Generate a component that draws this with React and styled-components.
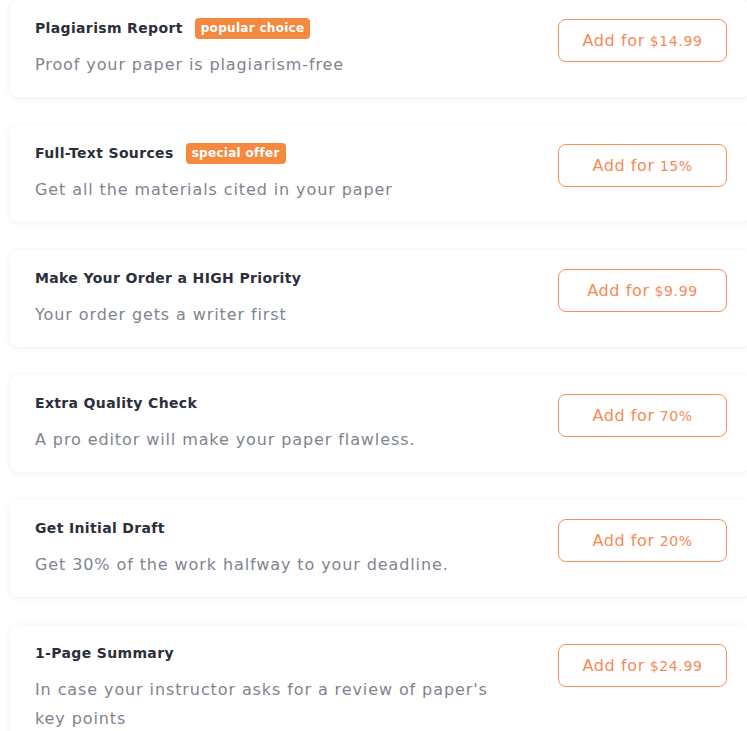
import React from "react";
import styled, { createGlobalStyle } from "styled-components";

const extras = [
  { id: 1, title: "Plagiarism Report", badge: "popular choice", text: "Proof your paper is plagiarism-free", price: "$14.99" },
  { id: 2, title: "Full-Text Sources", badge: "special offer", text: "Get all the materials cited in your paper", price: "15%" },
  { id: 3, title: "Make Your Order a HIGH Priority", text: "Your order gets a writer first", price: "$9.99" },
  { id: 4, title: "Extra Quality Check", text: "A pro editor will make your paper flawless.", price: "70%" },
  { id: 5, title: "Get Initial Draft", text: "Get 30% of the work halfway to your deadline.", price: "20%" },
  { id: 6, title: "1-Page Summary", text: "In case your instructor asks for a review of paper's key points", price: "$24.99" },
];

const App = () => {
  return (
    <>
      <GlobalStyle />
      <List>
        {extras.map((item) => (
          <Card key={item.id}>
            <Info>
              <TitleRow>
                <Title>{item.title}</Title>
                {item.badge && <Badge>{item.badge}</Badge>}
              </TitleRow>
              <Description>{item.text}</Description>
            </Info>
            <AddButton>
              Add for <Price>{item.price}</Price>
            </AddButton>
          </Card>
        ))}
      </List>
    </>
  );
};

export default App;

// Styled Components

const GlobalStyle = createGlobalStyle`
  body {
    margin: 0;
    background: #ffffff;
    font-family: 'DejaVu Sans', 'Liberation Sans', sans-serif;
    overflow: hidden;
  }
`;

const List = styled.div`
  width: 740px;
  padding: 0 0 0 10px;
  display: flex;
  flex-direction: column;
  gap: 28px;
`;

const Card = styled.div`
  background: #ffffff;
  border-radius: 8px;
  box-shadow: 0 1px 6px rgba(0, 0, 0, 0.07);
  padding: 18px 23px 18px 25px;
  display: flex;
  align-items: flex-start;
  justify-content: space-between;
  gap: 20px;
`;

const Info = styled.div`
  display: flex;
  flex-direction: column;
  gap: 12px;
  max-width: 470px;
`;

const TitleRow = styled.div`
  display: flex;
  align-items: center;
  gap: 12px;
  height: 20px;
`;

const Title = styled.div`
  font-size: 14px;
  font-weight: 700;
  color: #2b2f3b;
  letter-spacing: 0.35px;
`;

const Badge = styled.span`
  background: #f5893f;
  color: #ffffff;
  font-size: 12px;
  font-weight: 700;
  letter-spacing: 0.3px;
  border-radius: 4px;
  padding: 1px 6px;
  line-height: 19px;
`;

const Description = styled.div`
  font-size: 16px;
  line-height: 29px;
  color: #80848f;
  letter-spacing: 0.9px;
`;

const AddButton = styled.button`
  flex-shrink: 0;
  margin-top: 1px;
  width: 169px;
  height: 43px;
  border: 1.5px solid #f7925a;
  border-radius: 8px;
  background: #ffffff;
  color: #f58a55;
  font-family: 'DejaVu Sans', 'Liberation Sans', sans-serif;
  font-size: 16px;
  letter-spacing: 0.6px;
  cursor: pointer;
  display: flex;
  align-items: center;
  justify-content: center;
  gap: 5px;
`;

const Price = styled.span`
  font-size: 14px;
`;
